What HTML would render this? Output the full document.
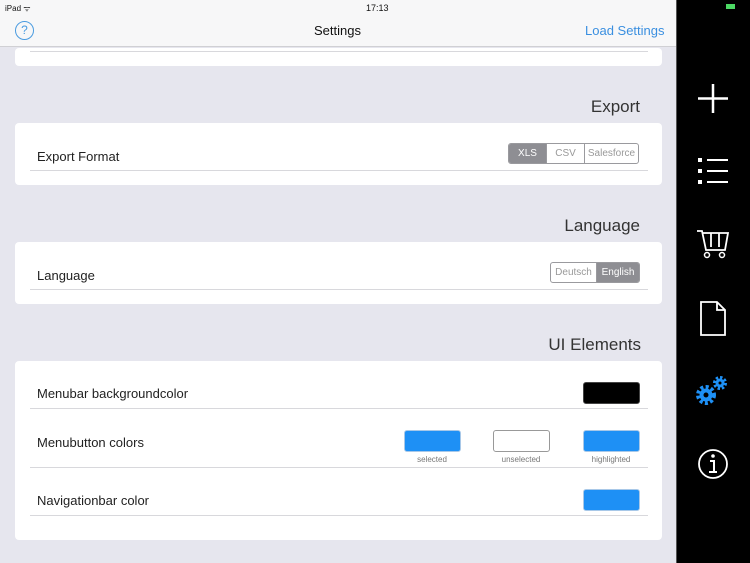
<!DOCTYPE html>
<html><head><meta charset="utf-8"><style>
*{margin:0;padding:0;box-sizing:border-box}
body{width:750px;height:563px;overflow:hidden;background:#e6e6ee;font-family:"Liberation Sans",sans-serif;position:relative;color:#111}
.a{position:absolute}
.nav{left:0;top:0;width:676px;height:47px;background:#f7f7f8;border-bottom:1px solid #d0d0d4}
.side{left:676px;top:0;width:74px;height:563px;background:#000;border-left:1px solid #555}
.card{position:absolute;left:15px;width:647px;background:#fff;border-radius:4px}
.line{position:absolute;left:30px;width:618px;height:1px;background:#d8d8dc}
.hdr{position:absolute;right:110px;font-size:17px;color:#333}
.lbl{position:absolute;left:37px;font-size:13px;color:#222}
.seg{position:absolute;display:flex;border:1px solid #9a9a9e;border-radius:3px;overflow:hidden;height:21px;font-size:10px}
.seg div{display:flex;align-items:center;justify-content:center;color:#999;border-left:1px solid #9a9a9e;height:19px;line-height:19px}
.seg div:first-child{border-left:none}
.seg .on{background:#8e8e93;color:#fff}
.sw{position:absolute;width:57px;height:22px;border-radius:3px;background:#1e90f5;border:1px solid #a8c8e8}
.cap{position:absolute;font-size:8px;color:#777;width:80px;text-align:center}
</style></head><body>
<div class="a nav"></div>
<div class="a" style="left:5px;top:3px;font-size:8px">iPad ᯤ</div>
<div class="a" style="left:366px;top:3px;font-size:9px">17:13</div>
<div class="a" style="left:15px;top:21px;width:19px;height:19px;border:1px solid #4a9be0;border-radius:50%;color:#4a9be0;font-size:12px;text-align:center;line-height:17px">?</div>
<div class="a" style="left:314px;top:23px;font-size:13px">Settings</div>
<div class="a" style="left:585px;top:23px;font-size:13px;color:#3a8fe0">Load Settings</div>
<div class="a side"></div>
<div class="a" style="left:726px;top:4px;width:9px;height:5px;background:#4cd964"></div>

<div class="card" style="top:48px;height:18px"></div>
<div class="line" style="top:51px"></div>

<div class="hdr" style="top:97px">Export</div>
<div class="card" style="top:123px;height:62px"></div>
<div class="lbl" style="top:149px">Export Format</div>
<div class="line" style="top:170px"></div>
<div class="seg" style="left:508px;top:143px;width:131px"><div class="on" style="width:37px">XLS</div><div style="width:38px">CSV</div><div style="flex:1">Salesforce</div></div>

<div class="hdr" style="top:216px">Language</div>
<div class="card" style="top:242px;height:62px"></div>
<div class="lbl" style="top:268px">Language</div>
<div class="line" style="top:289px"></div>
<div class="seg" style="left:550px;top:262px;width:90px"><div style="width:45px">Deutsch</div><div class="on" style="flex:1">English</div></div>

<div class="hdr" style="top:335px;right:109px">UI Elements</div>
<div class="card" style="top:361px;height:179px"></div>
<div class="lbl" style="top:386px">Menubar backgroundcolor</div>
<div class="line" style="top:408px"></div>
<div class="sw" style="left:583px;top:382px;background:#000;border-color:#444"></div>
<div class="lbl" style="top:435px">Menubutton colors</div>
<div class="sw" style="left:404px;top:430px"></div>
<div class="sw" style="left:493px;top:430px;background:#fff;border-color:#999"></div>
<div class="sw" style="left:583px;top:430px"></div>
<div class="cap" style="left:392px;top:455px">selected</div>
<div class="cap" style="left:481px;top:455px">unselected</div>
<div class="cap" style="left:571px;top:455px">highlighted</div>
<div class="line" style="top:467px"></div>
<div class="lbl" style="top:493px">Navigationbar color</div>
<div class="sw" style="left:583px;top:489px"></div>
<div class="line" style="top:515px"></div>

<svg class="a" style="left:676px;top:0" width="74" height="563" fill="none" stroke="#fff" stroke-width="2">
<path d="M37 84v29M22 98.5h30" stroke-width="2.5"/>
<rect x="22" y="158" width="4" height="4" fill="#fff" stroke="none"/>
<rect x="22" y="169" width="4" height="4" fill="#fff" stroke="none"/>
<rect x="22" y="180" width="4" height="4" fill="#fff" stroke="none"/>
<path d="M31 160h21M31 171h21M31 182h21"/>
<path d="M21 231h5l4 19h19l3-17H27M35 233v14M43 233v14" stroke-width="1.8"/>
<circle cx="31" cy="255" r="2.5" stroke-width="1.5"/><circle cx="46" cy="255" r="2.5" stroke-width="1.5"/>
<path d="M25 302h16l8 8v25H25z M41 302v8h8" stroke-width="1.8"/>
<g stroke="#1e90f5">
<circle cx="30" cy="395" r="8" stroke-width="4" fill="none" stroke-dasharray="3 2.3"/>
<circle cx="30" cy="395" r="4.5" stroke-width="4" fill="none"/>
<circle cx="44" cy="383" r="5.5" stroke-width="3" fill="none" stroke-dasharray="2.4 1.9"/>
<circle cx="44" cy="383" r="3" stroke-width="3" fill="none"/>
</g>
<circle cx="37" cy="464" r="14" stroke-width="1.8"/>
<circle cx="37" cy="456" r="1.8" fill="#fff" stroke="none"/>
<path d="M34 461h4v10M33 472h8" stroke-width="2"/>
</svg>
</body></html>
